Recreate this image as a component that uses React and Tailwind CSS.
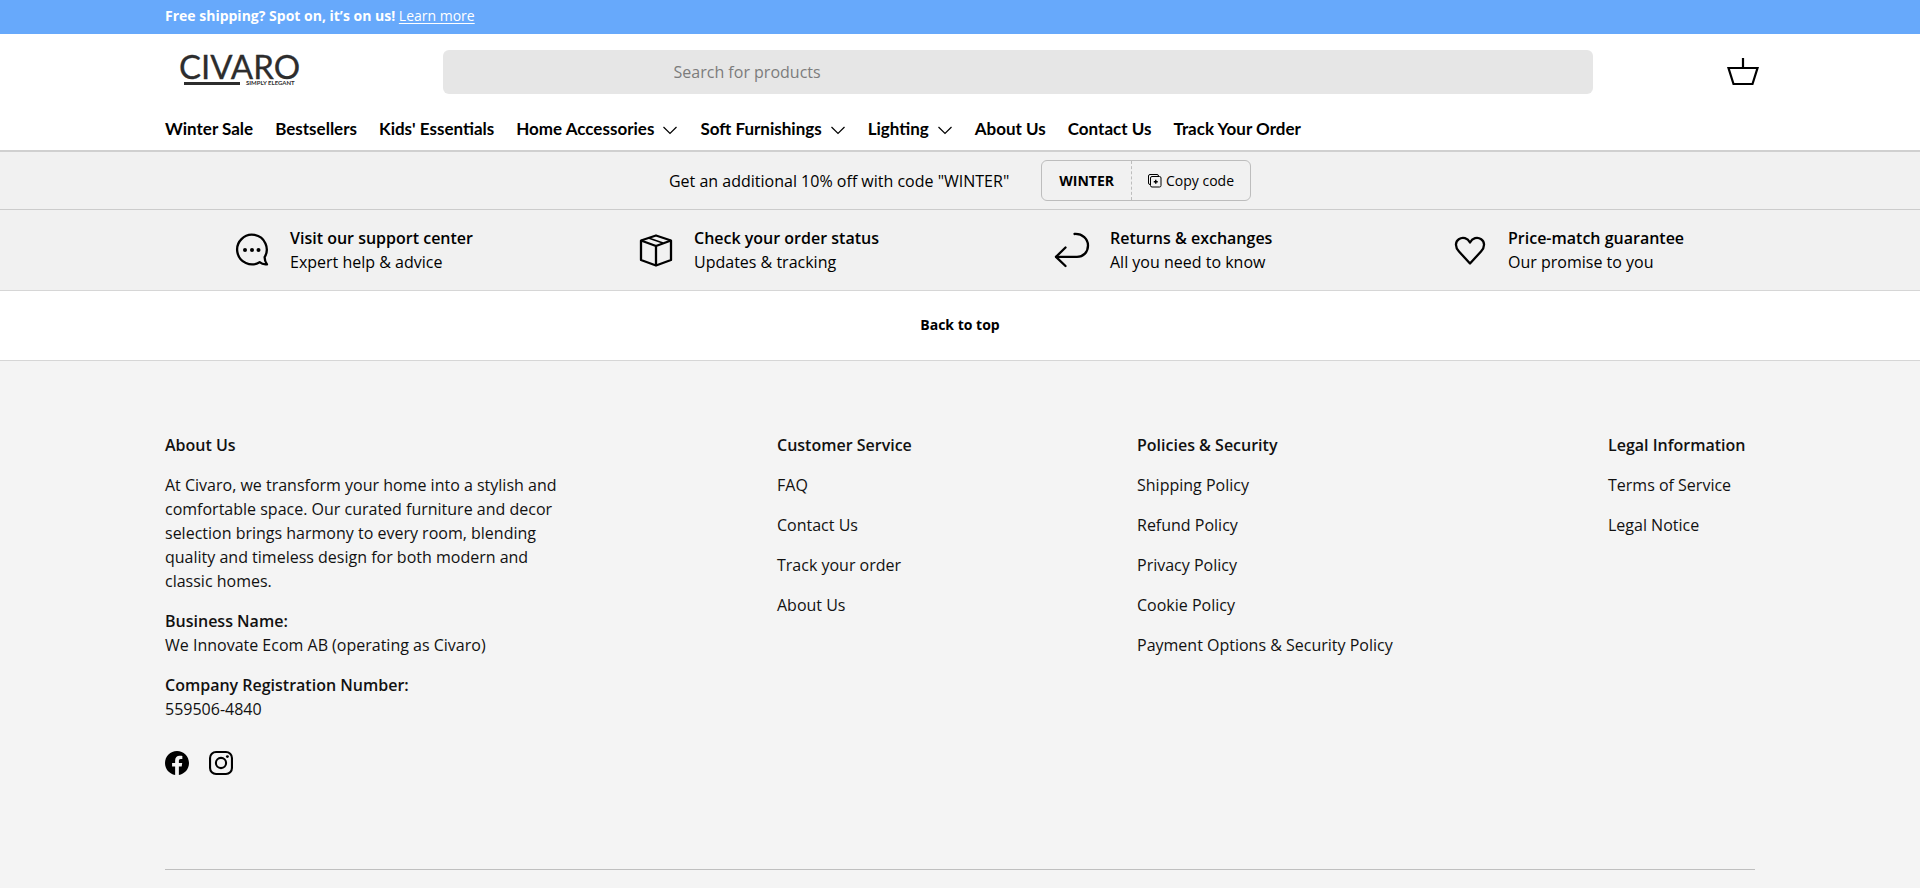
import { useState } from "react";

const navLinks = [
    { label: "Winter Sale" },
    { label: "Bestsellers" },
    { label: "Kids' Essentials" },
    { label: "Home Accessories", menu: true },
    { label: "Soft Furnishings", menu: true },
    { label: "Lighting", menu: true },
    { label: "About Us" },
    { label: "Contact Us" },
    { label: "Track Your Order" },
];

const footerColumns = [
    { title: "Customer Service", width: "w-36", links: ["FAQ", "Contact Us", "Track your order", "About Us"] },
    {
        title: "Policies & Security",
        width: "w-[255px]",
        links: ["Shipping Policy", "Refund Policy", "Privacy Policy", "Cookie Policy", "Payment Options & Security Policy"],
    },
    { title: "Legal Information", width: "w-[147px]", links: ["Terms of Service", "Legal Notice"] },
];

const ChatIcon = () => (
    <svg viewBox="0 0 36 36" className="size-9 shrink-0" fill="none" stroke="currentColor" strokeWidth="2.3" strokeLinecap="round" strokeLinejoin="round">
        <path d="M30.600 25.200A14.800 14.800 0 1 0 25.600 30.200C27.600 31.900 30 32.700 33 32.300C31.400 30 30.600 28 30.600 25.200Z" />
        <g fill="currentColor" stroke="none">
            <circle cx="11" cy="18" r="2" />
            <circle cx="18" cy="18" r="2" />
            <circle cx="24.500" cy="18" r="2" />
        </g>
    </svg>
);

const BoxIcon = () => (
    <svg viewBox="0 0 36 36" className="size-9 shrink-0" fill="none" stroke="currentColor" strokeWidth="2.3" strokeLinejoin="round">
        <path d="M18 3.500 33 8.500V28L18 33.500 3 28V8.500Z" />
        <path d="M3 8.500 18 14 33 8.500M18 14V33.500" />
        <path d="M10.500 6 25 11" strokeWidth="1.500" />
    </svg>
);

const ReturnIcon = () => (
    <svg viewBox="0 0 36 36" className="size-9 shrink-0" fill="none" stroke="currentColor" strokeWidth="2.3" strokeLinecap="round" strokeLinejoin="round">
        <path d="M20.500 2C28.500 1.500 34 7 34 13.500C34 20 29.500 24.800 23 24.800H2" />
        <path d="M11.500 15.500 2 24.800 11.500 34" />
    </svg>
);

const HeartIcon = () => (
    <svg viewBox="0 0 36 36" className="size-9 shrink-0" fill="none" stroke="currentColor" strokeWidth="2.3" strokeLinejoin="round">
        <path d="M18 31.500 7 19.500C2.500 14.500 3.500 9.500 6.800 7.200C10.800 4.500 15.500 6 18 10.500C20.500 6 25.200 4.500 29.200 7.200C32.500 9.500 33.500 14.500 29 19.500Z" />
    </svg>
);

const CopyIcon = () => (
    <svg viewBox="0 0 14 14" className="size-3.5" fill="none" stroke="currentColor">
        <path d="M2.500 10.500H2A1.500 1.500 0 0 1 .5 9V2A1.500 1.500 0 0 1 2 .5H9A1.500 1.500 0 0 1 10.500 2V2.500" />
        <rect x="2.500" y="2.500" width="10.500" height="10.500" rx="1.500" />
        <path d="M7.750 5.750V9.750M5.750 7.750H9.750" strokeWidth="1.400" />
    </svg>
);

const features = [
    { Icon: ChatIcon, width: "w-[226px]", title: "Visit our support center", text: "Expert help & advice" },
    { Icon: BoxIcon, width: "w-[238px]", title: "Check your order status", text: "Updates & tracking" },
    { Icon: ReturnIcon, width: "w-[220px]", title: "Returns & exchanges", text: "All you need to know" },
    { Icon: HeartIcon, width: "w-[234px]", title: "Price-match guarantee", text: "Our promise to you" },
];

const Logo = () => (
    <a href="#home" aria-label="Civaro" className="block">
        <svg viewBox="0 0 150 44" className="w-[150px] h-11 overflow-visible" fill="#2d2d2d">
            <text x="14" y="29" fontFamily="Lato, sans-serif" fontSize="33" stroke="#2d2d2d" strokeWidth=".3">CIVARO</text>
            <rect x="19" y="32" width="56" height="3" />
            <text x="81" y="35" fontFamily="Lato, sans-serif" fontSize="6" fontWeight="700">SIMPLY ELEGANT</text>
        </svg>
    </a>
);

const Header = () => (
    <header className="bg-white border-b-2 border-[#d0d0d0]">
        <div className="max-w-[1590px] mx-auto">
            <div className="flex items-center pt-4">
                <div className="w-[278px]">
                    <Logo />
                </div>
                <input
                    type="search"
                    aria-label="Search for products"
                    placeholder="Search for products"
                    className="flex-1 h-11 px-[14.5%] rounded-md bg-[#e6e6e6] placeholder:text-[#7c7c7c] outline-none"
                />
                <div className="w-[162px] flex justify-end">
                    <button type="button" aria-label="Basket" className="-mr-1">
                        <svg viewBox="0 0 32 32" className="size-8" fill="none" stroke="currentColor" strokeWidth="2.2">
                            <path d="M1.500 12H30.500L25.500 28H6.500ZM16 2V12" />
                        </svg>
                    </button>
                </div>
            </div>
            <nav className="flex gap-[22px] pt-[23px] pb-[9px] text-[17px] font-bold font-[Lato,sans-serif]">
                {navLinks.map((item) => (
                    <a key={item.label} href="#nav" className="flex items-center gap-2 leading-6">
                        {item.label}
                        {item.menu && (
                            <svg viewBox="0 0 16 16" className="size-4" fill="none" stroke="currentColor" strokeWidth="1.2">
                                <path d="M1.500 6 8 12.500 14.500 6" />
                            </svg>
                        )}
                    </a>
                ))}
            </nav>
        </div>
    </header>
);

const PromoBar = () => {
    const [copied, setCopied] = useState(false);

    return (
        <div className="flex justify-center items-center gap-8 py-2 bg-[#f1f1f1] border-b border-[#cccccc]">
            <p>Get an additional 10% off with code "WINTER"</p>
            <div className="flex h-[41px] text-sm border border-[#bdbdbd] rounded-md">
                <span className="flex items-center px-[17px] font-bold border-r border-dashed border-[#bdbdbd]">WINTER</span>
                <button type="button" className="flex items-center gap-1 px-4" onClick={() => setCopied(true)}>
                    <CopyIcon />
                    {copied ? "Copied" : "Copy code"}
                </button>
            </div>
        </div>
    );
};

const Footer = () => (
    <footer className="bg-[#f4f4f4] text-[#111111]">
        <div className="max-w-[1590px] mx-auto pt-[72px] pb-5">
            <div className="flex justify-between pb-[94px] border-b border-[#bfbfbf]">
                <div className="w-[396px] flex flex-col gap-4">
                    <h2 className="font-semibold">About Us</h2>
                    <p>
                        At Civaro, we transform your home into a stylish and comfortable space. Our curated furniture and
                        decor selection brings harmony to every room, blending quality and timeless design for both modern
                        and classic homes.
                    </p>
                    <p>
                        <strong className="font-semibold">Business Name:</strong>
                        <br />
                        We Innovate Ecom AB (operating as Civaro)
                    </p>
                    <p>
                        <strong className="font-semibold">Company Registration Number:</strong>
                        <br />
                        559506-4840
                    </p>
                    <div className="flex gap-5 pt-3.5 text-black">
                        <a href="#facebook" aria-label="Facebook">
                            <svg viewBox="0 0 24 24" className="size-6" fill="currentColor">
                                <path d="M24 12.070C24 5.410 18.630 0 12 0S0 5.400 0 12.070C0 18.100 4.390 23.100 10.130 24v-8.440H7.080v-3.490h3.040V9.410c0-3.020 1.800-4.700 4.540-4.700 1.310 0 2.680.240 2.680.240v2.970h-1.500c-1.500 0-1.960.930-1.960 1.890v2.260h3.320l-.530 3.500h-2.800V24C19.620 23.100 24 18.100 24 12.070Z" />
                            </svg>
                        </a>
                        <a href="#instagram" aria-label="Instagram">
                            <svg viewBox="0 0 24 24" className="size-6" fill="none" stroke="currentColor" strokeWidth="2.1">
                                <rect x="1.050" y="1.050" width="21.900" height="21.900" rx="6" />
                                <circle cx="12" cy="12" r="5.100" />
                                <circle cx="18.400" cy="5.600" r="1.440" fill="currentColor" stroke="none" />
                            </svg>
                        </a>
                    </div>
                </div>
                {footerColumns.map((col) => (
                    <div key={col.title} className={col.width}>
                        <h2 className="font-semibold whitespace-nowrap">{col.title}</h2>
                        <ul className="flex flex-col gap-4 pt-4 whitespace-nowrap">
                            {col.links.map((link) => (
                                <li key={link}>
                                    <a href="#footer">{link}</a>
                                </li>
                            ))}
                        </ul>
                    </div>
                ))}
            </div>
        </div>
    </footer>
);

const App = () => (
    <div className="min-h-screen bg-[#f4f4f4] text-black text-base leading-6 font-['Open_Sans',sans-serif]">
        <div className="bg-[#67a9fb] text-white">
            <p className="max-w-[1590px] mx-auto pt-1.5 pb-2 text-sm leading-5">
                <strong className="font-bold">Free shipping? Spot on, it’s on us!</strong>{" "}
                <a href="#shipping" className="underline underline-offset-2">Learn more</a>
            </p>
        </div>
        <Header />
        <PromoBar />
        <section className="bg-[#f1f1f1] border-b border-[#d6d6d6]">
            <div className="max-w-[1590px] mx-auto flex justify-between px-[69px] py-4">
                {features.map(({ Icon, width, title, text }) => (
                    <a key={title} href="#help" className={`flex items-center gap-5 whitespace-nowrap ${width}`}>
                        <Icon />
                        <span>
                            <span className="block font-semibold">{title}</span>
                            <span className="block">{text}</span>
                        </span>
                    </a>
                ))}
            </div>
        </section>
        <div className="bg-white border-b border-[#d6d6d6] flex justify-center">
            <button type="button" className="pt-[22px] pb-[23px] text-sm leading-6 font-bold" onClick={() => window.scrollTo(0, 0)}>
                Back to top
            </button>
        </div>
        <Footer />
    </div>
);

export default App;
